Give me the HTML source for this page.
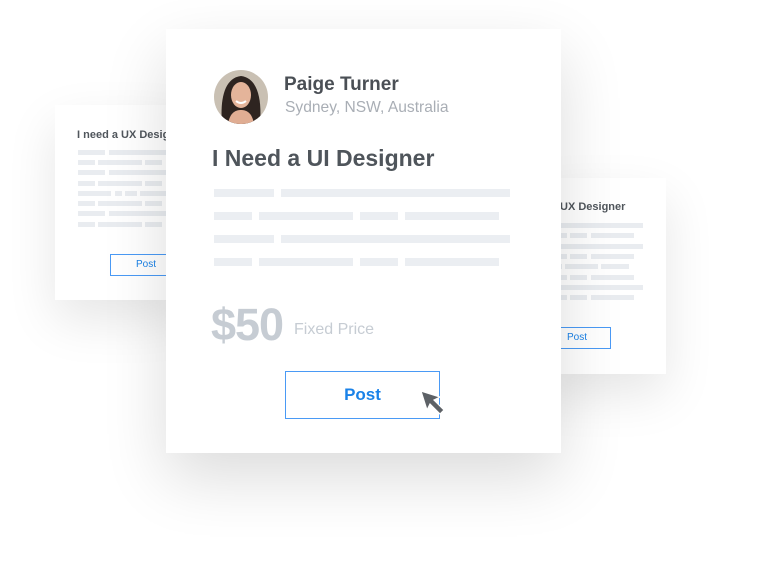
<!DOCTYPE html>
<html><head><style>
body{margin:0;width:762px;height:577px;background:#fff;position:relative;overflow:hidden;font-family:"Liberation Sans",sans-serif}
.card{position:absolute;background:#fff;box-shadow:0 20px 50px rgba(0,0,0,0.10)}
.l{position:absolute;height:5px;background:#e9ecf0}
.L{position:absolute;height:8px;background:#ebeef2}
.btn{position:absolute;border:1px solid #4a9af5;color:#1a82e8;font-weight:bold;text-align:center;box-sizing:border-box;background:#fff}
</style></head><body>
<div class="card" style="left:55px;top:105px;width:130px;height:195px">
<div style="position:absolute;left:22px;top:24px;font-size:11px;color:#50565c;font-weight:bold;white-space:nowrap">I need a UX Designer</div>
<div class="l" style="left:23px;top:45px;width:27px"></div><div class="l" style="left:54px;top:45px;width:70px"></div>
<div class="l" style="left:23px;top:55px;width:17px"></div><div class="l" style="left:43px;top:55px;width:44px"></div><div class="l" style="left:90px;top:55px;width:17px"></div>
<div class="l" style="left:23px;top:65px;width:27px"></div><div class="l" style="left:54px;top:65px;width:70px"></div>
<div class="l" style="left:23px;top:76px;width:17px"></div><div class="l" style="left:43px;top:76px;width:44px"></div><div class="l" style="left:90px;top:76px;width:17px"></div>
<div class="l" style="left:23px;top:86px;width:33px"></div><div class="l" style="left:60px;top:86px;width:7px"></div><div class="l" style="left:70px;top:86px;width:12px"></div><div class="l" style="left:85px;top:86px;width:30px"></div>
<div class="l" style="left:23px;top:96px;width:17px"></div><div class="l" style="left:43px;top:96px;width:44px"></div><div class="l" style="left:90px;top:96px;width:17px"></div>
<div class="l" style="left:23px;top:106px;width:27px"></div><div class="l" style="left:54px;top:106px;width:70px"></div>
<div class="l" style="left:23px;top:117px;width:17px"></div><div class="l" style="left:43px;top:117px;width:44px"></div><div class="l" style="left:90px;top:117px;width:17px"></div>
<div class="btn" style="left:55px;top:149px;width:72px;height:22px;line-height:20px;font-size:10px;font-weight:normal">Post</div>
</div>
<div class="card" style="left:536px;top:178px;width:130px;height:196px">
<div style="position:absolute;left:-20px;top:23px;font-size:11px;color:#50565c;font-weight:bold;white-space:nowrap">I need a UX Designer</div>
<div class="l" style="left:10px;top:45px;width:97px"></div>
<div class="l" style="left:10px;top:55px;width:21px"></div><div class="l" style="left:34px;top:55px;width:17px"></div><div class="l" style="left:55px;top:55px;width:43px"></div>
<div class="l" style="left:10px;top:66px;width:97px"></div>
<div class="l" style="left:10px;top:76px;width:21px"></div><div class="l" style="left:34px;top:76px;width:17px"></div><div class="l" style="left:55px;top:76px;width:43px"></div>
<div class="l" style="left:10px;top:86px;width:16px"></div><div class="l" style="left:29px;top:86px;width:33px"></div><div class="l" style="left:65px;top:86px;width:28px"></div>
<div class="l" style="left:10px;top:97px;width:21px"></div><div class="l" style="left:34px;top:97px;width:17px"></div><div class="l" style="left:55px;top:97px;width:43px"></div>
<div class="l" style="left:10px;top:107px;width:97px"></div>
<div class="l" style="left:10px;top:117px;width:21px"></div><div class="l" style="left:34px;top:117px;width:17px"></div><div class="l" style="left:55px;top:117px;width:43px"></div>
<div class="btn" style="left:4px;top:149px;width:71px;height:22px;line-height:20px;font-size:10px;font-weight:normal;text-align:left;padding-left:26px">Post</div>
</div>
<div class="card" style="left:166px;top:29px;width:395px;height:424px;box-shadow:0 25px 60px rgba(0,0,0,0.14)">
<svg style="position:absolute;left:48px;top:41px" width="54" height="54" viewBox="0 0 54 54">
<defs><clipPath id="c"><circle cx="27" cy="27" r="27"/></clipPath></defs>
<g clip-path="url(#c)"><rect width="54" height="54" fill="#c9c0b3"/>
<path d="M8 54 C6 30 10 8 27 6 C44 8 48 30 46 54Z" fill="#2e2420"/>
<ellipse cx="27" cy="25" rx="10" ry="13" fill="#e4b49a"/>
<path d="M14 54 C16 42 22 40 27 40 C32 40 38 42 40 54Z" fill="#e0ad93"/>
<path d="M22 31 Q27 35 32 31" stroke="#fff" stroke-width="2" fill="none"/></g></svg>
<div style="position:absolute;left:118px;top:45px;font-size:19px;color:#4a4f55;font-weight:bold">Paige Turner</div>
<div style="position:absolute;left:119px;top:70px;font-size:15.6px;color:#a9aeb5">Sydney, NSW, Australia</div>
<div style="position:absolute;left:46px;top:116px;font-size:23px;color:#4f555b;font-weight:bold">I Need a UI Designer</div>
<div class="L" style="left:48px;top:160px;width:60px"></div><div class="L" style="left:115px;top:160px;width:229px"></div>
<div class="L" style="left:48px;top:183px;width:38px"></div><div class="L" style="left:93px;top:183px;width:94px"></div><div class="L" style="left:194px;top:183px;width:38px"></div><div class="L" style="left:239px;top:183px;width:94px"></div>
<div class="L" style="left:48px;top:206px;width:60px"></div><div class="L" style="left:115px;top:206px;width:229px"></div>
<div class="L" style="left:48px;top:229px;width:38px"></div><div class="L" style="left:93px;top:229px;width:94px"></div><div class="L" style="left:194px;top:229px;width:38px"></div><div class="L" style="left:239px;top:229px;width:94px"></div>
<div style="position:absolute;left:45px;top:270px;font-size:45px;color:#c6ccd3;font-weight:bold;letter-spacing:-1px">$50</div>
<div style="position:absolute;left:128px;top:292px;font-size:16px;color:#c6ccd3">Fixed Price</div>
<div class="btn" style="left:119px;top:342px;width:155px;height:48px;line-height:46px;font-size:17px">Post</div>
<svg style="position:absolute;left:252px;top:359px" width="30" height="30" viewBox="0 0 30 30"><path d="M3 3 L22 9 L16 12 L26 22 L22 26 L12 16 L9 22 Z" fill="#5d6166" stroke="#fff" stroke-width="1.2"/></svg>
</div>
</body></html>
